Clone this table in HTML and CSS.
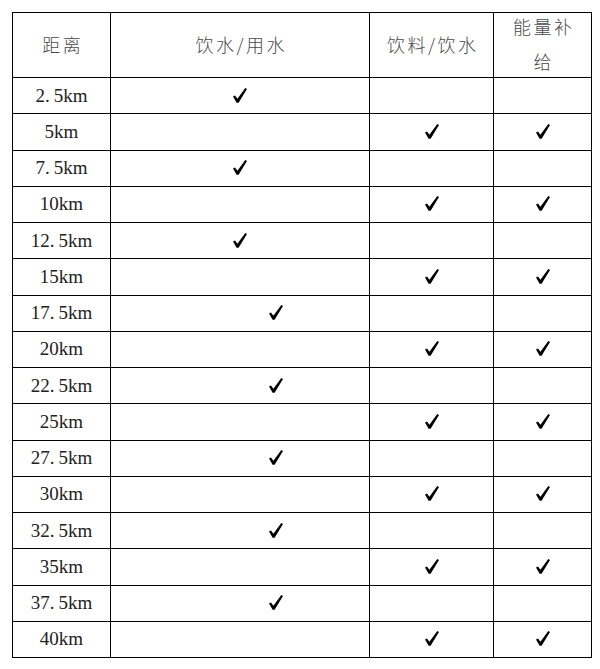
FILE: index.html
```html
<!DOCTYPE html>
<html lang="zh">
<head>
<meta charset="utf-8">
<title>补给站</title>
<link rel="stylesheet" href="styles.css">
</head>
<body>
<svg width="0" height="0" class="defs" aria-hidden="true">
  <defs>
    <symbol id="chk" viewBox="0 0 14 15">
      <path d="M0,8.6 L2,7.4 L4.4,10.7 L12.3,0 L14,1 L5.6,14.8 L3.6,14.8 Z" fill="#000"/>
    </symbol>
  </defs>
</svg>
<div class="grid">
  <div class="cell head">距离</div>
  <div class="cell head">饮水/用水</div>
  <div class="cell head">饮料/饮水</div>
  <div class="cell head"><div class="wrap">能量补给</div></div>

  <div class="cell num">2<span class="dot">.</span>5km</div>
  <div class="cell"><svg class="ck"><use href="#chk"/></svg></div>
  <div class="cell"></div>
  <div class="cell"></div>

  <div class="cell num">5km</div>
  <div class="cell"></div>
  <div class="cell"><svg class="ck"><use href="#chk"/></svg></div>
  <div class="cell"><svg class="ck"><use href="#chk"/></svg></div>

  <div class="cell num">7<span class="dot">.</span>5km</div>
  <div class="cell"><svg class="ck"><use href="#chk"/></svg></div>
  <div class="cell"></div>
  <div class="cell"></div>

  <div class="cell num">10km</div>
  <div class="cell"></div>
  <div class="cell"><svg class="ck"><use href="#chk"/></svg></div>
  <div class="cell"><svg class="ck"><use href="#chk"/></svg></div>

  <div class="cell num">12<span class="dot">.</span>5km</div>
  <div class="cell"><svg class="ck"><use href="#chk"/></svg></div>
  <div class="cell"></div>
  <div class="cell"></div>

  <div class="cell num">15km</div>
  <div class="cell"></div>
  <div class="cell"><svg class="ck"><use href="#chk"/></svg></div>
  <div class="cell"><svg class="ck"><use href="#chk"/></svg></div>

  <div class="cell num">17<span class="dot">.</span>5km</div>
  <div class="cell shift"><svg class="ck"><use href="#chk"/></svg></div>
  <div class="cell"></div>
  <div class="cell"></div>

  <div class="cell num">20km</div>
  <div class="cell"></div>
  <div class="cell"><svg class="ck"><use href="#chk"/></svg></div>
  <div class="cell"><svg class="ck"><use href="#chk"/></svg></div>

  <div class="cell num">22<span class="dot">.</span>5km</div>
  <div class="cell shift"><svg class="ck"><use href="#chk"/></svg></div>
  <div class="cell"></div>
  <div class="cell"></div>

  <div class="cell num">25km</div>
  <div class="cell"></div>
  <div class="cell"><svg class="ck"><use href="#chk"/></svg></div>
  <div class="cell"><svg class="ck"><use href="#chk"/></svg></div>

  <div class="cell num">27<span class="dot">.</span>5km</div>
  <div class="cell shift"><svg class="ck"><use href="#chk"/></svg></div>
  <div class="cell"></div>
  <div class="cell"></div>

  <div class="cell num">30km</div>
  <div class="cell"></div>
  <div class="cell"><svg class="ck"><use href="#chk"/></svg></div>
  <div class="cell"><svg class="ck"><use href="#chk"/></svg></div>

  <div class="cell num">32<span class="dot">.</span>5km</div>
  <div class="cell shift"><svg class="ck"><use href="#chk"/></svg></div>
  <div class="cell"></div>
  <div class="cell"></div>

  <div class="cell num">35km</div>
  <div class="cell"></div>
  <div class="cell"><svg class="ck"><use href="#chk"/></svg></div>
  <div class="cell"><svg class="ck"><use href="#chk"/></svg></div>

  <div class="cell num">37<span class="dot">.</span>5km</div>
  <div class="cell shift"><svg class="ck"><use href="#chk"/></svg></div>
  <div class="cell"></div>
  <div class="cell"></div>

  <div class="cell num">40km</div>
  <div class="cell"></div>
  <div class="cell"><svg class="ck"><use href="#chk"/></svg></div>
  <div class="cell"><svg class="ck"><use href="#chk"/></svg></div>
</div>
</body>
</html>
```
FILE: styles.css
```css
html, body {
  margin: 0;
  padding: 0;
  background: #fff;
}
body {
  width: 600px;
  height: 669px;
  overflow: hidden;
}
.defs {
  position: absolute;
  width: 0;
  height: 0;
}
.grid {
  margin: 12px 0 0 12px;
  width: 580px;
  box-sizing: border-box;
  display: grid;
  grid-template-columns: 97px 258px 123px 97px;
  grid-template-rows: 64px;
  grid-auto-rows: 35.25px;
  gap: 1px;
  padding: 1px;
  background: #000;
}
.cell {
  background: #fff;
  display: flex;
  align-items: center;
  justify-content: center;
  overflow: visible;
}
.head {
  font-family: "Noto Sans CJK SC", sans-serif;
  font-weight: 300;
  font-size: 18px;
  letter-spacing: 2.5px;
  padding-left: 2.5px;
  padding-bottom: 2px;
  color: #4a4a4a;
}
.wrap {
  width: 64px;
  line-height: 35px;
  text-align: center;
  word-break: break-all;
}
.num {
  font-family: "Liberation Serif", serif;
  font-size: 19px;
  color: #222;
}
.dot {
  padding-right: 4px;
}
.ck {
  width: 14px;
  height: 15px;
  margin-top: -1px;
}
.shift {
  padding-left: 71px;
}
```
